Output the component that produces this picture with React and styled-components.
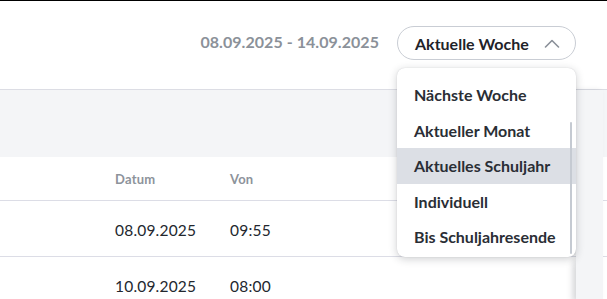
import React from "react";
import styled, { createGlobalStyle } from "styled-components";

const GlobalStyle = createGlobalStyle`
  html, body {
    margin: 0;
    padding: 0;
    background: #fff;
  }
  body {
    font-family: Lato, "Open Sans", Arial, sans-serif;
    color: #23272e;
  }
`;

const Page = styled.div`
  width: 607px;
  height: 299px;
  border-top: 1px solid #000;
  position: relative;
  overflow: hidden;
  background: #fff;
`;

const Header = styled.div`
  height: 88px;
  display: flex;
  justify-content: flex-end;
  align-items: flex-start;
  gap: 18px;
  padding: 25px 31px 0 0;
  box-sizing: border-box;
`;

const DateRange = styled.span`
  margin-top: 6px;
  font-size: 16px;
  font-weight: 700;
  color: #8b9199;
  letter-spacing: 0.05px;
`;

const SelectWrap = styled.div`
  position: relative;
  z-index: 5;
`;

const SelectButton = styled.button`
  width: 179px;
  height: 34px;
  box-sizing: border-box;
  border: 1px solid #c9cdd4;
  border-radius: 17px;
  background: #fff;
  display: flex;
  align-items: center;
  justify-content: space-between;
  padding: 0 15px 0 17px;
  font-family: inherit;
  font-size: 16px;
  font-weight: 700;
  color: #1f2329;
  cursor: pointer;
`;

const Menu = styled.ul`
  position: absolute;
  top: 42px;
  left: 0;
  width: 179px;
  margin: 0;
  padding: 9px 0 0;
  height: 189px;
  box-sizing: border-box;
  list-style: none;
  background: #fff;
  border-radius: 8px;
  box-shadow: 0 2px 8px rgba(30, 35, 45, 0.22), 0 0 1px rgba(30, 35, 45, 0.2);
  overflow: hidden;
`;

const Scrollbar = styled.div`
  position: absolute;
  right: 4px;
  top: 54px;
  width: 2px;
  height: 132px;
  background: #c5cad2;
  border-radius: 1px;
`;

const MenuItem = styled.li`
  height: 35.5px;
  display: flex;
  align-items: center;
  padding-left: 17px;
  font-size: 16px;
  font-weight: 700;
  color: #2a2e35;
  background: ${(p) => (p.$active ? "#dcdfe5" : "transparent")};
`;

const Toolbar = styled.div`
  height: 67px;
  border-top: 1px solid #dcdde4;
  background: #f4f5f7;
`;

const Row = styled.div`
  display: grid;
  grid-template-columns: 115px 115px 77px 269px 31px;
  height: ${(p) => (p.$head ? "43px" : "55px")};
  border-bottom: 1px solid #dcdde6;
  align-items: center;
`;

const Cell = styled.div`
  font-size: ${(p) => (p.$head ? "13px" : "15.5px")};
  font-weight: ${(p) => (p.$head ? 700 : 400)};
  color: ${(p) => (p.$head ? "#8d939b" : "#23272e")};
  letter-spacing: 0.2px;
  padding-top: ${(p) => (p.$head ? "0" : "2px")};
`;

const StickyCell = styled.div`
  align-self: stretch;
  background: #fff;
  box-shadow: -9px 0 9px -6px rgba(20, 25, 40, 0.09);
`;

const SideShade = styled.div`
  position: absolute;
  left: 576px;
  top: 89px;
  bottom: 0;
  width: 27px;
  background: #f4f5f7;
  box-shadow: -3px 0 5px rgba(20, 25, 40, 0.1);
  z-index: 2;
`;

const Chevron = () => (
  <svg width="16" height="9" viewBox="0 0 16 9" fill="none">
    <polyline
      points="1.5,8 8,1.5 14.5,8"
      stroke="#8a9099"
      strokeWidth="1.6"
      strokeLinecap="round"
      strokeLinejoin="round"
    />
  </svg>
);

const options = [
  "Nächste Woche",
  "Aktueller Monat",
  "Aktuelles Schuljahr",
  "Individuell",
  "Bis Schuljahresende",
];

const rows = [
  { datum: "08.09.2025", von: "09:55" },
  { datum: "10.09.2025", von: "08:00" },
];

export default function App() {
  return (
    <Page>
      <GlobalStyle />
      <Header>
        <DateRange>08.09.2025 - 14.09.2025</DateRange>
        <SelectWrap>
          <SelectButton>
            Aktuelle Woche
            <Chevron />
          </SelectButton>
          <Menu>
            {options.map((o) => (
              <MenuItem key={o} $active={o === "Aktuelles Schuljahr"}>
                {o}
              </MenuItem>
            ))}
            <Scrollbar />
          </Menu>
        </SelectWrap>
      </Header>
      <Toolbar />
      <Row $head>
        <div />
        <Cell $head>Datum</Cell>
        <Cell $head>Von</Cell>
        <div />
        <StickyCell />
      </Row>
      {rows.map((r) => (
        <Row key={r.datum}>
          <div />
          <Cell>{r.datum}</Cell>
          <Cell>{r.von}</Cell>
          <div />
          <StickyCell />
        </Row>
      ))}
      <SideShade />
    </Page>
  );
}
